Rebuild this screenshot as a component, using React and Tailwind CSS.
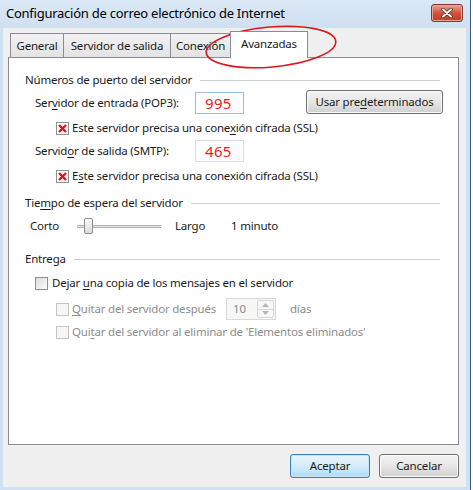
import React from "react";

const font = "font-['Segoe_UI','Noto_Sans',sans-serif]";

// accelerator letter
const U = ({ children }) => <span className="underline underline-offset-[2px]">{children}</span>;

function GroupHeader({ children }) {
    return (
        <div className="flex items-center h-[16px] pl-[16px] pr-[18px]">
            <span className="whitespace-nowrap">{children}</span>
            <div className="flex-1 h-px bg-[#c8cdd2] ml-[8px]" />
        </div>
    );
}

function Check({ checked, disabled }) {
    return (
        <div
            className={
                "w-[13px] h-[13px] shrink-0 border flex items-center justify-center " +
                (disabled
                    ? "border-[#c4c4c4] bg-[#f6f6f6]"
                    : checked
                      ? "border-[#8e8f8f] bg-white"
                      : "border-[#8e8f8f] bg-gradient-to-br from-[#dcdcdc] to-[#fbfbfb]")
            }
        >
            {checked && (
                <svg width="11" height="11" viewBox="0 0 11 11">
                    <path d="M2 2 L9 9 M9 2 L2 9" stroke="#e3101c" strokeWidth="2.4" />
                </svg>
            )}
        </div>
    );
}

function Port({ value, focused }) {
    return (
        <div
            className={
                "w-[49px] h-[22px] bg-white border flex items-center pl-[9px] text-[15px] tracking-[0.3px] text-[#ee1c24] " +
                (focused ? "border-[#9fbfe0]" : "border-[#d9dee4]")
            }
        >
            {value}
        </div>
    );
}

function Button({ children, primary, className = "" }) {
    return (
        <div
            className={
                "h-[24px] rounded-[3px] border flex items-center justify-center " +
                (primary
                    ? "border-[#3c7fb1] bg-gradient-to-b from-[#e9f5fc] via-[#d4ecfa] to-[#aedcf6] shadow-[inset_0_0_0_1px_#bfe6fb] "
                    : "border-[#707070] bg-gradient-to-b from-[#f3f3f3] via-[#e6e6e6] to-[#d0d0d0] shadow-[inset_0_0_0_1px_#fcfcfc] ") +
                className
            }
        >
            {children}
        </div>
    );
}

function Tab({ children, w, active }) {
    if (active) {
        return (
            <div
                className={`h-[27px] -mb-px -ml-px relative z-10 bg-white border border-b-0 border-[#898c95] flex items-center justify-center pb-[3px] ${w}`}
            >
                {children}
            </div>
        );
    }
    return (
        <div
            className={`h-[24px] -ml-px first:ml-0 border border-b-0 border-[#898c95] bg-gradient-to-b from-[#f2f2f2] to-[#e3e3e3] flex items-center justify-center ${w}`}
        >
            {children}
        </div>
    );
}

export default function App() {
    return (
        <div className={`w-[473px] h-[490px] bg-white relative overflow-hidden text-[11.5px] tracking-[-0.2px] text-[#1b1b1b] ${font}`}>
            <div className="w-[471px] h-[490px] flex flex-col bg-[#cfe1f2] border-r border-[#3d5d7c]">
                {/* title bar */}
                <div className="h-[28px] flex items-center justify-between pl-[6px] pr-[7px] bg-gradient-to-b from-[#dbe8f5] to-[#cfe0f1]">
                    <span className="text-[13px] text-black tracking-[-0.25px]">
                        Configuración de correo electrónico de Internet
                    </span>
                    <div className="w-[32px] h-[18px] -mt-[3px] rounded-[3px] border border-[#7a3b36] bg-gradient-to-b from-[#e8a493] via-[#d0533d] to-[#c43a25] flex items-center justify-center shadow-[inset_0_0_0_1px_#eba796]">
                        <svg width="12" height="10" viewBox="0 0 12 10">
                            <path d="M2 1.5 L10 8.5 M10 1.5 L2 8.5" stroke="#4a2520" strokeWidth="3.4" strokeLinecap="round" />
                            <path d="M2 1.5 L10 8.5 M10 1.5 L2 8.5" stroke="#ffffff" strokeWidth="2" strokeLinecap="round" />
                        </svg>
                    </div>
                </div>

                {/* client */}
                <div className="flex-1 ml-[3px] mr-[4px] mb-[3px] bg-[#f0f0f0] pt-[3px] pl-[5px] pr-[7px] pb-[9px] flex flex-col">
                    <div className="h-[26px] flex items-end pl-[2px]">
                        <Tab w="w-[54px]">General</Tab>
                        <Tab w="w-[108px]">Servidor de salida</Tab>
                        <Tab w="w-[61px]">Conexión</Tab>
                        <Tab w="w-[78px]" active>Avanzadas</Tab>
                    </div>

                    <div className="h-[388px] bg-white border border-[#898c95] flex flex-col pt-[14px]">
                        <GroupHeader>Números de puerto del servidor</GroupHeader>
                        <div className="mt-[4px] h-[22px] flex items-center pl-[26px]">
                            <span className="w-[160px]">Ser<U>v</U>idor de entrada (POP3):</span>
                            <Port value="995" focused />
                            <Button className="ml-[62px] w-[137px] -mt-[2px] h-[23px]">
                                <span>Usar pre<U>d</U>eterminados</span>
                            </Button>
                        </div>
                        <div className="mt-[6px] h-[16px] flex items-center pl-[47px] gap-[3px]">
                            <Check checked />
                            <span>Este servidor precisa una cone<U>x</U>ión cifrada (SSL)</span>
                        </div>
                        <div className="mt-[4px] h-[22px] flex items-center pl-[26px]">
                            <span className="w-[160px]">Servid<U>o</U>r de salida (SMTP):</span>
                            <Port value="465" />
                        </div>
                        <div className="mt-[6px] h-[16px] flex items-center pl-[47px] gap-[3px]">
                            <Check checked />
                            <span>E<U>s</U>te servidor precisa una conexión cifrada (SSL)</span>
                        </div>

                        <div className="mt-[11px]">
                            <GroupHeader>Tie<U>m</U>po de espera del servidor</GroupHeader>
                        </div>
                        <div className="mt-[5px] h-[20px] flex items-center pl-[21px]">
                            <span className="w-[47px]">Corto</span>
                            <div className="w-[84px] h-[16px] relative flex items-center">
                                <div className="w-full h-[3px] border-y border-[#b0b0b0] bg-[#e7eaea]" />
                                <div className="absolute left-[7px] top-0 w-[9px] h-[16px] rounded-[2px] border border-[#8c8c8c] bg-gradient-to-b from-[#fbfbfb] to-[#dadada]" />
                            </div>
                            <span className="ml-[14px] w-[56px]">Largo</span>
                            <span>1 minuto</span>
                        </div>

                        <div className="mt-[15px]">
                            <GroupHeader>Entrega</GroupHeader>
                        </div>
                        <div className="mt-[8px] h-[16px] flex items-center pl-[26px] gap-[4px]">
                            <Check />
                            <span>Dejar <U>u</U>na copia de los mensajes en el servidor</span>
                        </div>
                        <div className="mt-[7px] h-[22px] flex items-center pl-[47px] text-[#8d8d8d]">
                            <Check disabled />
                            <span className="ml-[3px] w-[154px] whitespace-nowrap"><U>Q</U>uitar del servidor después</span>
                            <div className="w-[50px] h-[22px] border border-[#d5d9de] bg-[#f7f7f7] flex items-stretch">
                                <span className="flex-1 flex items-center pl-[6px]">10</span>
                                <div className="w-[17px] my-[1px] mr-[1px] flex flex-col border border-[#d7d7d7] rounded-[2px]">
                                    <div className="flex-1 flex items-center justify-center border-b border-[#d7d7d7]">
                                        <svg width="7" height="4" viewBox="0 0 7 4"><path d="M0 4 L3.5 0 L7 4 Z" fill="#b5b5b5" /></svg>
                                    </div>
                                    <div className="flex-1 flex items-center justify-center">
                                        <svg width="7" height="4" viewBox="0 0 7 4"><path d="M0 0 L3.5 4 L7 0 Z" fill="#b5b5b5" /></svg>
                                    </div>
                                </div>
                            </div>
                            <span className="ml-[14px]">días</span>
                        </div>
                        <div className="mt-[4px] h-[16px] flex items-center pl-[47px] gap-[3px] text-[#8d8d8d]">
                            <Check disabled />
                            <span>Qui<U>t</U>ar del servidor al eliminar de 'Elementos eliminados'</span>
                        </div>
                    </div>

                    <div className="mt-[9px] flex justify-end gap-[9px]">
                        <Button primary className="w-[80px]">Aceptar</Button>
                        <Button className="w-[80px]">Cancelar</Button>
                    </div>
                </div>
            </div>

            {/* red annotation ellipse */}
            <svg className="absolute left-0 top-0" width="473" height="100" viewBox="0 0 473 100">
                <ellipse cx="271" cy="47" rx="65" ry="20" transform="rotate(-5 271 47)" fill="none" stroke="#e3141b" strokeWidth="1.6" />
            </svg>
        </div>
    );
}
